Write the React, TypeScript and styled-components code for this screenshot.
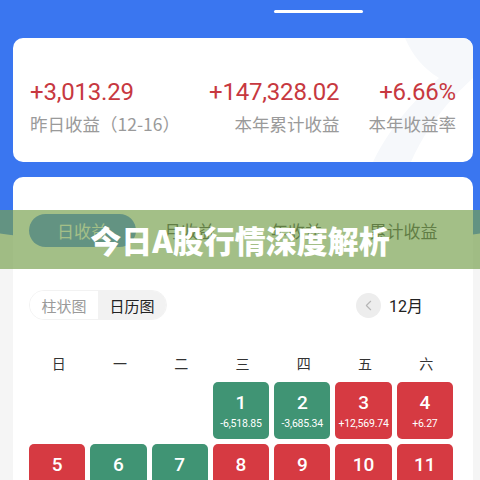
import React from "react";
import styled, { createGlobalStyle } from "styled-components";
import { ChevronLeft } from "lucide-react";

const GlobalStyle = createGlobalStyle`
  html, body {
    margin: 0;
    padding: 0;
    background: #f5f5f5;
  }
  body {
    font-family: "Noto Sans CJK SC", "Noto Sans", sans-serif;
  }
`;

const BLUE = "#3a76f0";
const GREEN = "#409474";
const RED = "#d63a42";

const Page = styled.div`
  position: relative;
  width: 480px;
  min-height: 480px;
  overflow: hidden;
  background: #f5f5f5;

  &::before {
    content: "";
    position: absolute;
    top: 0;
    left: -40px;
    right: -40px;
    height: 246px;
    background: ${BLUE};
    border-radius: 0 0 50% 50% / 0 0 26px 26px;
  }
`;

const Content = styled.div`
  position: relative;
  padding: 0 7px 0 13px;
`;

const TopBar = styled.div`
  height: 38px;
  padding-left: 261px;
  padding-top: 10px;
  box-sizing: border-box;
`;

const Indicator = styled.div`
  width: 89px;
  height: 3px;
  border-radius: 2px;
  background: #ffffff;
`;

const Card = styled.div`
  position: relative;
  background: #ffffff;
  border-radius: 10px;
  overflow: hidden;
`;

const SummaryCard = styled(Card)`
  height: 124px;
  box-sizing: border-box;
  padding: 40px 17px 0 17px;
  display: flex;
  justify-content: space-between;
`;

const Watermark = styled.svg`
  position: absolute;
  right: 0;
  top: 0;
  pointer-events: none;
`;

const Stat = styled.div<{ $align: "left" | "right" }>`
  position: relative;
  display: flex;
  flex-direction: column;
  align-items: ${({ $align }) => ($align === "left" ? "flex-start" : "flex-end")};
`;

const StatValue = styled.div`
  font-family: Roboto, "Noto Sans CJK SC", sans-serif;
  font-size: 24px;
  line-height: 28px;
  color: #c73840;
  letter-spacing: -0.2px;
`;

const StatLabel = styled.div`
  margin-top: 5px;
  font-size: 17.5px;
  line-height: 26px;
  color: #9a9a9a;
  white-space: nowrap;
`;

const MainCard = styled(Card)`
  margin-top: 15px;
  padding: 37px 20px 0 16px;
  min-height: 320px;
`;

const Tabs = styled.div`
  display: flex;
  margin-right: -4px;
`;

const Tab = styled.div<{ $active?: boolean }>`
  flex: 1;
  height: 33px;
  border-radius: 17px;
  display: flex;
  align-items: center;
  justify-content: center;
  font-size: 17px;
  color: ${({ $active }) => ($active ? "#ffffff" : "#333333")};
  background: ${({ $active }) => ($active ? BLUE : "transparent")};
`;

const Toolbar = styled.div`
  margin-top: 43px;
  display: flex;
  align-items: center;
  justify-content: space-between;
`;

const Segmented = styled.div`
  display: flex;
  height: 30px;
  border-radius: 15px;
  border: 1px solid #f2f2f2;
  box-sizing: border-box;
  overflow: hidden;
`;

const Segment = styled.div<{ $active?: boolean }>`
  width: 68px;
  display: flex;
  align-items: center;
  justify-content: center;
  font-size: 15px;
  color: ${({ $active }) => ($active ? "#222222" : "#9a9a9a")};
  background: ${({ $active }) => ($active ? "#f2f2f2" : "#ffffff")};
`;

const MonthNav = styled.div`
  display: flex;
  align-items: center;
  gap: 8px;
  margin-right: 30px;
`;

const RoundButton = styled.div`
  width: 25px;
  height: 25px;
  border-radius: 50%;
  background: #ededed;
  display: flex;
  align-items: center;
  justify-content: center;
  color: #b5b5b5;
`;

const MonthLabel = styled.div`
  font-family: Roboto, "Noto Sans CJK SC", sans-serif;
  font-size: 16px;
  color: #222222;
`;

const Weekdays = styled.div`
  margin-top: 33px;
  display: grid;
  grid-template-columns: repeat(7, 1fr);
  column-gap: 5px;
`;

const Weekday = styled.div`
  text-align: center;
  font-size: 14px;
  line-height: 20px;
  color: #333333;
  padding-left: 3px;
`;

const Grid = styled.div`
  margin-top: 9px;
  display: grid;
  grid-template-columns: repeat(7, 1fr);
  gap: 5px;
`;

const Day = styled.div<{ $tone: "up" | "down" }>`
  height: 57px;
  border-radius: 5px;
  background: ${({ $tone }) => ($tone === "up" ? RED : GREEN)};
  color: #ffffff;
  display: flex;
  flex-direction: column;
  align-items: center;
  padding-top: 10px;
  box-sizing: border-box;
  font-family: Roboto, "Noto Sans", sans-serif;
`;

const DayNumber = styled.div`
  font-size: 19px;
  line-height: 22px;
  font-weight: 500;
`;

const DayValue = styled.div`
  margin-top: 3px;
  font-size: 10.5px;
  line-height: 14px;
  letter-spacing: -0.2px;
  white-space: nowrap;
`;

const Banner = styled.div`
  position: absolute;
  left: 0;
  top: 210px;
  width: 480px;
  height: 59px;
  background: rgba(120, 160, 78, 0.68);
  display: flex;
  align-items: center;
  justify-content: center;
`;

const BannerTitle = styled.div`
  font-family: "Noto Sans CJK SC", sans-serif;
  font-size: 31px;
  font-weight: 900;
  color: #ffffff;
  line-height: 1;
`;

const stats = [
  { value: "+3,013.29", label: "昨日收益（12-16）", align: "left" as const },
  { value: "+147,328.02", label: "本年累计收益", align: "right" as const },
  { value: "+6.66%", label: "本年收益率", align: "right" as const },
];

const tabs = ["日收益", "月收益", "年收益", "累计收益"];
const weekdays = ["日", "一", "二", "三", "四", "五", "六"];

type DayData = { day: number; value: string } | null;

const days: DayData[] = [
  null,
  null,
  null,
  { day: 1, value: "-6,518.85" },
  { day: 2, value: "-3,685.34" },
  { day: 3, value: "+12,569.74" },
  { day: 4, value: "+6.27" },
  { day: 5, value: "+2,104.36" },
  { day: 6, value: "-1,327.80" },
  { day: 7, value: "-845.12" },
  { day: 8, value: "+3,260.45" },
  { day: 9, value: "+918.07" },
  { day: 10, value: "+5,472.19" },
  { day: 11, value: "+1,036.58" },
];

export default function App() {
  return (
    <>
      <GlobalStyle />
      <Page>
        <Content>
          <TopBar>
            <Indicator />
          </TopBar>

          <SummaryCard>
            <Watermark width="120" height="124" viewBox="0 0 120 124">
              <path
                d="M52 0 H120 V40 C96 62 74 88 58 124 H20 C38 86 66 58 86 40 C70 30 60 18 52 0 Z"
                fill="#f6f8fb"
              />
            </Watermark>
            {stats.map((s) => (
              <Stat key={s.label} $align={s.align}>
                <StatValue>{s.value}</StatValue>
                <StatLabel>{s.label}</StatLabel>
              </Stat>
            ))}
          </SummaryCard>

          <MainCard>
            <Tabs>
              {tabs.map((t, i) => (
                <Tab key={t} $active={i === 0}>
                  {t}
                </Tab>
              ))}
            </Tabs>

            <Toolbar>
              <Segmented>
                <Segment>柱状图</Segment>
                <Segment $active>日历图</Segment>
              </Segmented>
              <MonthNav>
                <RoundButton>
                  <ChevronLeft size={17} strokeWidth={1.6} />
                </RoundButton>
                <MonthLabel>12月</MonthLabel>
              </MonthNav>
            </Toolbar>

            <Weekdays>
              {weekdays.map((w) => (
                <Weekday key={w}>{w}</Weekday>
              ))}
            </Weekdays>

            <Grid>
              {days.map((d, i) =>
                d ? (
                  <Day key={i} $tone={d.value.startsWith("-") ? "down" : "up"}>
                    <DayNumber>{d.day}</DayNumber>
                    <DayValue>{d.value}</DayValue>
                  </Day>
                ) : (
                  <div key={i} />
                )
              )}
            </Grid>
          </MainCard>
        </Content>

        <Banner>
          <BannerTitle>今日A股行情深度解析</BannerTitle>
        </Banner>
      </Page>
    </>
  );
}
